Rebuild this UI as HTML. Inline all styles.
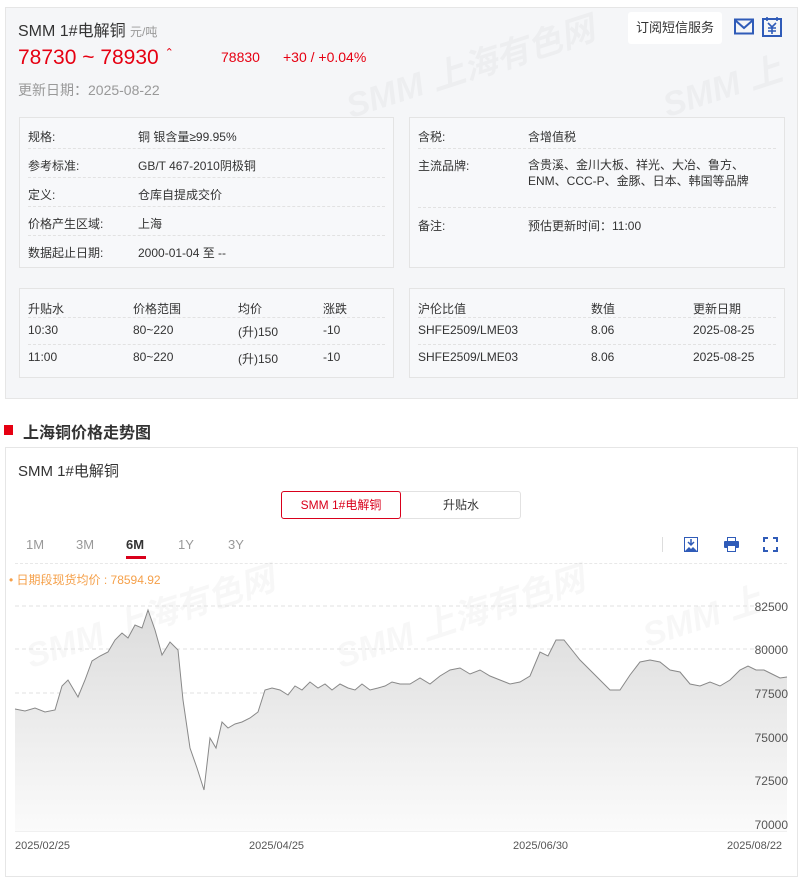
<!DOCTYPE html>
<html><head><meta charset="utf-8"><style>
*{margin:0;padding:0;box-sizing:border-box}
body{width:802px;height:871px;background:#fff;font-family:"Liberation Sans","Noto Sans CJK SC",sans-serif;position:relative;overflow:hidden;color:#333}
.a{position:absolute;white-space:nowrap}
.top{position:absolute;left:5px;top:7px;width:793px;height:392px;background:#f5f6f8;border:1px solid #e6e6e6}
.box{position:absolute;border:1px solid #e4e4e4;background:#f7f8fa}
.row{position:absolute;left:8px;right:8px;border-bottom:1px dashed #e2e2e2}
.t{font-size:12px;color:#333}
.wm{position:absolute;font-family:"Liberation Sans","Noto Sans CJK SC",sans-serif;font-weight:bold;font-style:italic;font-size:34px;color:rgba(0,0,0,0.03);transform:rotate(-18deg);white-space:nowrap}
</style></head><body>
<div class="top"></div>
<div class="wm" style="left:340px;top:40px">SMM 上海有色网</div>
<div class="wm" style="left:660px;top:60px">SMM 上</div>

<div class="a" style="left:18px;top:17px;font-size:16px;color:#333">SMM 1#电解铜 <span style="font-size:12px;color:#999">元/吨</span></div>
<div class="a" style="left:18px;top:46px;font-size:21px;color:#e60012">78730 ~ 78930 <span style="font-size:11px;vertical-align:8px">⌃</span></div>
<div class="a" style="left:221px;top:49px;font-size:14px;color:#e60012">78830</div>
<div class="a" style="left:283px;top:49px;font-size:14px;color:#e60012">+30 / +0.04%</div>
<div class="a" style="left:18px;top:80px;font-size:14px;color:#999">更新日期：2025-08-22</div>

<div class="a" style="left:628px;top:12px;width:94px;height:32px;background:#fff;border-radius:3px;font-size:13px;color:#333;line-height:32px;text-align:center">订阅短信服务</div>
<svg class="a" style="left:734px;top:18px" width="20" height="18" viewBox="0 0 20 18"><rect x="1" y="1.5" width="18" height="14" fill="none" stroke="#2f5bb8" stroke-width="2"/><path d="M1.5 2.5 L10 10 L18.5 2.5" fill="none" stroke="#2f5bb8" stroke-width="2"/></svg>
<svg class="a" style="left:762px;top:16px" width="20" height="22" viewBox="0 0 20 22"><rect x="1" y="3" width="18" height="17" fill="none" stroke="#2f5bb8" stroke-width="2"/><path d="M5 1v4M15 1v4M6 7l4 4 4-4M10 11v7M6 12h8M6 15h8" stroke="#2f5bb8" stroke-width="1.6" fill="none"/></svg>

<div class="box" style="left:19px;top:117px;width:375px;height:151px">
<div class="row" style="top:0;height:31px"></div><div class="row" style="top:31px;height:29px"></div><div class="row" style="top:60px;height:29px"></div><div class="row" style="top:89px;height:29px"></div>
</div>
<div class="a t" style="left:28px;top:128px">规格:</div><div class="a t" style="left:138px;top:128px">铜 银含量≥99.95%</div>
<div class="a t" style="left:28px;top:157px">参考标准:</div><div class="a t" style="left:138px;top:157px">GB/T 467-2010阴极铜</div>
<div class="a t" style="left:28px;top:186px">定义:</div><div class="a t" style="left:138px;top:186px">仓库自提成交价</div>
<div class="a t" style="left:28px;top:215px">价格产生区域:</div><div class="a t" style="left:138px;top:215px">上海</div>
<div class="a t" style="left:28px;top:244px">数据起止日期:</div><div class="a t" style="left:138px;top:244px">2000-01-04 至 --</div>

<div class="box" style="left:409px;top:117px;width:376px;height:151px">
<div class="row" style="top:0;height:31px"></div><div class="row" style="top:31px;height:59px"></div>
</div>
<div class="a t" style="left:418px;top:128px">含税:</div><div class="a t" style="left:528px;top:128px">含增值税</div>
<div class="a t" style="left:418px;top:157px">主流品牌:</div><div class="a t" style="left:528px;top:157px;line-height:16px">含贵溪、金川大板、祥光、大冶、鲁方、<br>ENM、CCC-P、金豚、日本、韩国等品牌</div>
<div class="a t" style="left:418px;top:217px">备注:</div><div class="a t" style="left:528px;top:217px">预估更新时间：11:00</div>

<div class="box" style="left:19px;top:288px;width:375px;height:90px">
<div class="row" style="top:0;height:29px"></div><div class="row" style="top:29px;height:27px"></div>
</div>
<div class="a t" style="left:28px;top:300px">升贴水</div><div class="a t" style="left:133px;top:300px">价格范围</div><div class="a t" style="left:238px;top:300px">均价</div><div class="a t" style="left:323px;top:300px">涨跌</div>
<div class="a t" style="left:28px;top:323px">10:30</div><div class="a t" style="left:133px;top:323px">80~220</div><div class="a t" style="left:238px;top:323px">(升)150</div><div class="a t" style="left:323px;top:323px">-10</div>
<div class="a t" style="left:28px;top:350px">11:00</div><div class="a t" style="left:133px;top:350px">80~220</div><div class="a t" style="left:238px;top:350px">(升)150</div><div class="a t" style="left:323px;top:350px">-10</div>

<div class="box" style="left:409px;top:288px;width:376px;height:90px">
<div class="row" style="top:0;height:29px"></div><div class="row" style="top:29px;height:27px"></div>
</div>
<div class="a t" style="left:418px;top:300px">沪伦比值</div><div class="a t" style="left:591px;top:300px">数值</div><div class="a t" style="left:693px;top:300px">更新日期</div>
<div class="a t" style="left:418px;top:323px">SHFE2509/LME03</div><div class="a t" style="left:591px;top:323px">8.06</div><div class="a t" style="left:693px;top:323px">2025-08-25</div>
<div class="a t" style="left:418px;top:350px">SHFE2509/LME03</div><div class="a t" style="left:591px;top:350px">8.06</div><div class="a t" style="left:693px;top:350px">2025-08-25</div>

<div class="a" style="left:4px;top:425px;width:9px;height:10px;background:#e60012"></div>
<div class="a" style="left:23px;top:419px;font-size:16px;font-weight:bold;color:#333">上海铜价格走势图</div>

<div class="a" style="left:5px;top:447px;width:793px;height:430px;border:1px solid #e6e6e6"></div>
<div class="a" style="left:18px;top:460px;font-size:15px;color:#333">SMM 1#电解铜</div>
<div class="a" style="left:281px;top:491px;width:240px;height:28px;border:1px solid #e2e2e2;border-radius:3px"></div>
<div class="a" style="left:281px;top:491px;width:120px;height:28px;border:1px solid #d9001b;border-radius:3px;font-size:12px;color:#d9001b;text-align:center;line-height:26px">SMM 1#电解铜</div>
<div class="a" style="left:401px;top:491px;width:120px;height:28px;font-size:12px;color:#333;text-align:center;line-height:28px">升贴水</div>

<div class="a" style="left:26px;top:537px;font-size:13px;color:#999">1M</div>
<div class="a" style="left:76px;top:537px;font-size:13px;color:#999">3M</div>
<div class="a" style="left:126px;top:537px;font-size:13px;color:#333;font-weight:bold">6M</div>
<div class="a" style="left:126px;top:556px;width:20px;height:3px;background:#d9001b"></div>
<div class="a" style="left:178px;top:537px;font-size:13px;color:#999">1Y</div>
<div class="a" style="left:228px;top:537px;font-size:13px;color:#999">3Y</div>
<div class="a" style="left:662px;top:537px;width:1px;height:15px;background:#ddd"></div>
<svg class="a" style="left:684px;top:537px" width="14" height="15" viewBox="0 0 14 15"><rect x="0.5" y="0.5" width="13" height="14" fill="none" stroke="#2f5bb8"/><path d="M7 2v6M4 5l3 3 3-3" stroke="#2f5bb8" stroke-width="1.5" fill="none"/><path d="M1 14l4-4 2 2 2-2 4 4z" fill="#2f5bb8"/></svg>
<svg class="a" style="left:724px;top:537px" width="15" height="15" viewBox="0 0 15 15"><rect x="3.5" y="0.5" width="8" height="4" fill="none" stroke="#2f5bb8"/><rect x="0" y="4" width="15" height="7" rx="1" fill="#2f5bb8"/><rect x="3.5" y="8.5" width="8" height="6" fill="#fff" stroke="#2f5bb8"/></svg>
<svg class="a" style="left:763px;top:537px" width="15" height="15" viewBox="0 0 15 15"><path d="M1 5V1h4M10 1h4v4M14 10v4h-4M5 14H1v-4" stroke="#2f5bb8" stroke-width="2" fill="none"/></svg>
<div class="a" style="left:15px;top:563px;width:772px;border-top:1px dashed #e8e8e8"></div>
<div class="a" style="left:9px;top:571px;font-size:12px;color:#f5a04a">• 日期段现货均价 : 78594.92</div>

<div class="wm" style="left:20px;top:590px">SMM 上海有色网</div>
<div class="wm" style="left:330px;top:590px">SMM 上海有色网</div>
<div class="wm" style="left:640px;top:590px">SMM 上</div>

<svg class="a" style="left:0;top:590px" width="802" height="281" viewBox="0 590 802 281">
<defs><linearGradient id="g" x1="0" y1="0" x2="0" y2="1"><stop offset="0" stop-color="#dcdcdc"/><stop offset="1" stop-color="#fbfbfb"/></linearGradient></defs>
<g stroke="#e0e0e0" stroke-dasharray="4,3"><line x1="15" y1="606" x2="787" y2="606"/><line x1="15" y1="649" x2="787" y2="649"/><line x1="15" y1="693" x2="787" y2="693"/></g>
<line x1="15" y1="831" x2="787" y2="831" stroke="#e0e0e0"/>
<path id="p" d="M15,709 L25,711 35,708 45,712 55,710 62,686 68,680 78,697 85,680 92,661 100,656 108,652 115,640 122,633 128,638 135,625 142,628 148,610 155,630 162,655 170,642 178,650 183,700 190,748 197,768 204,790 210,738 216,748 222,722 228,728 235,724 242,722 250,718 258,712 265,690 272,688 280,690 288,695 295,686 302,690 310,682 318,688 325,684 332,690 340,684 348,688 355,690 362,684 370,690 378,688 385,686 392,682 400,684 410,684 420,678 430,684 440,676 450,670 460,668 470,674 480,670 490,676 500,680 510,684 520,682 530,676 540,652 548,656 556,640 564,640 572,650 580,660 590,670 600,680 610,690 620,690 630,675 640,662 650,660 660,662 670,670 680,672 690,684 700,686 710,682 720,686 730,680 740,670 748,666 756,670 764,670 772,674 780,678 787,677" fill="none"/>
<path d="M15,709 L25,711 35,708 45,712 55,710 62,686 68,680 78,697 85,680 92,661 100,656 108,652 115,640 122,633 128,638 135,625 142,628 148,610 155,630 162,655 170,642 178,650 183,700 190,748 197,768 204,790 210,738 216,748 222,722 228,728 235,724 242,722 250,718 258,712 265,690 272,688 280,690 288,695 295,686 302,690 310,682 318,688 325,684 332,690 340,684 348,688 355,690 362,684 370,690 378,688 385,686 392,682 400,684 410,684 420,678 430,684 440,676 450,670 460,668 470,674 480,670 490,676 500,680 510,684 520,682 530,676 540,652 548,656 556,640 564,640 572,650 580,660 590,670 600,680 610,690 620,690 630,675 640,662 650,660 660,662 670,670 680,672 690,684 700,686 710,682 720,686 730,680 740,670 748,666 756,670 764,670 772,674 780,678 787,677 L787,831 L15,831Z" fill="url(#g)"/>
<use href="#p" stroke="#888" stroke-width="1"/>
<g font-size="12" fill="#555" font-family="Liberation Sans,sans-serif" text-anchor="end"><text x="788" y="611">82500</text><text x="788" y="654">80000</text><text x="788" y="698">77500</text><text x="788" y="742">75000</text><text x="788" y="785">72500</text><text x="788" y="829">70000</text></g>
<g font-size="11" fill="#555" font-family="Liberation Sans,sans-serif"><text x="15" y="849">2025/02/25</text><text x="249" y="849">2025/04/25</text><text x="513" y="849">2025/06/30</text><text x="727" y="849">2025/08/22</text></g>
</svg>
</body></html>
